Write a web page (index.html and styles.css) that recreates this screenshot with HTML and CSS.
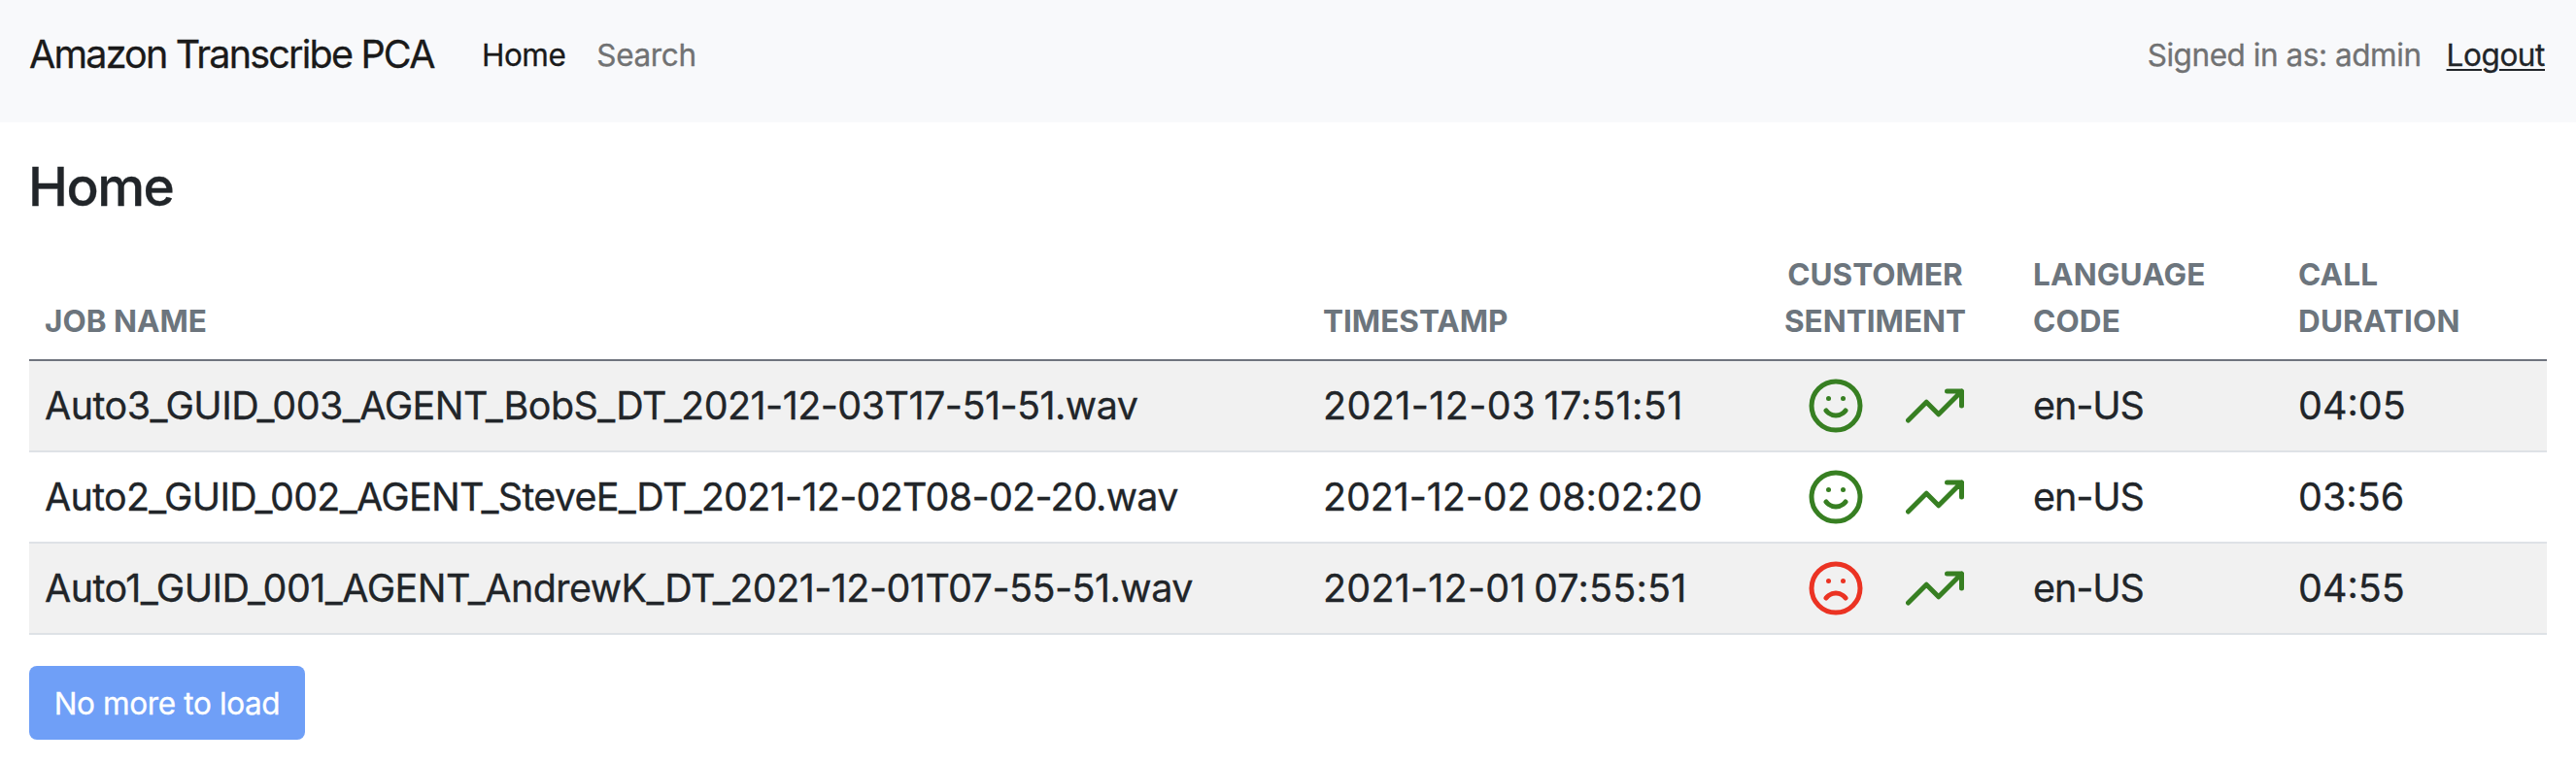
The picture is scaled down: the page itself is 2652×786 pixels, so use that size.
FILE: index.html
```html
<!DOCTYPE html>
<html lang="en">
<head>
<meta charset="utf-8">
<title>Amazon Transcribe PCA</title>
<link rel="stylesheet" href="styles.css">
</head>
<body>
<svg class="defs" aria-hidden="true">
  <symbol id="smile" viewBox="0 0 24 24"><circle cx="12" cy="12" r="10"/><path d="M8 14s1.5 2 4 2 4-2 4-2M9 9h.01M15 9h.01"/></symbol>
  <symbol id="frown" viewBox="0 0 24 24"><circle cx="12" cy="12" r="10"/><path d="M16 16s-1.500-2-4-2-4 2-4 2M9 9h.01M15 9h.01"/></symbol>
  <symbol id="trend" viewBox="0 0 24 24"><path d="M23 6l-9.500 9.500-5-5L1 18M17 6h6v6"/></symbol>
</svg>
<header class="navbar">
  <a class="brand">Amazon Transcribe PCA</a>
  <nav class="nav">
    <a class="nav-link active">Home</a>
    <a class="nav-link search">Search</a>
  </nav>
  <div class="account">
    <span class="signed">Signed in as: admin</span>
    <a class="logout">Logout</a>
  </div>
</header>
<main class="content">
  <h1 class="title">Home</h1>
  <table class="jobs">
    <colgroup><col class="c-job"><col class="c-time"><col class="c-mood"><col class="c-lang"><col class="c-dur"></colgroup>
    <thead>
      <tr><th>JOB NAME</th><th class="time">TIMESTAMP</th><th class="center">CUSTOMER<br>SENTIMENT</th><th class="wide">LANGUAGE<br>CODE</th><th class="wide">CALL<br>DURATION</th></tr>
    </thead>
    <tbody>
      <tr class="striped">
        <td class="job-a">Auto3_GUID_003_AGENT_BobS_DT_2021-12-03T17-51-51.wav</td>
        <td class="time time-a">2021-12-03 17:51:51</td>
        <td><div class="mood"><svg class="icon good"><use href="#smile"/></svg><svg class="icon good"><use href="#trend"/></svg></div></td>
        <td class="lang">en-US</td><td>04:05</td>
      </tr>
      <tr>
        <td class="job-b">Auto2_GUID_002_AGENT_SteveE_DT_2021-12-02T08-02-20.wav</td>
        <td class="time time-b">2021-12-02 08:02:20</td>
        <td><div class="mood"><svg class="icon good"><use href="#smile"/></svg><svg class="icon good"><use href="#trend"/></svg></div></td>
        <td class="lang">en-US</td><td>03:56</td>
      </tr>
      <tr class="striped">
        <td class="job-a">Auto1_GUID_001_AGENT_AndrewK_DT_2021-12-01T07-55-51.wav</td>
        <td class="time time-c">2021-12-01 07:55:51</td>
        <td><div class="mood"><svg class="icon bad"><use href="#frown"/></svg><svg class="icon good"><use href="#trend"/></svg></div></td>
        <td class="lang">en-US</td><td>04:55</td>
      </tr>
    </tbody>
  </table>
  <button class="load" disabled>No more to load</button>
</main>
</body>
</html>
```
FILE: styles.css
```css
* { box-sizing: border-box; }
body {
  margin: 0;
  background: #fff;
  color: #212529;
  font-family: Inter, "Liberation Sans", sans-serif;
  font-size: 31.5px;
  line-height: 48px;
  -webkit-text-stroke: .3px currentColor;
}
.defs { display: none; }

.navbar {
  display: flex;
  align-items: flex-start;
  height: 126px;
  padding: 26px 30px 0;
  background: #f8f9fb;
}
.brand {
  width: 418px;
  margin-right: 48px;
  font-size: 39.5px;
  line-height: 60px;
  letter-spacing: -1.8px;
  white-space: nowrap;
  color: #1a1a1a;
}
.nav { display: flex; gap: 32px; padding-top: 7px; }
.nav-link { letter-spacing: -.5px; color: #1a1a1a; }
.nav-link.search { letter-spacing: -.34px; color: #717273; }
.account { display: flex; gap: 26px; margin-left: auto; padding: 7px 2px 0 0; }
.signed { letter-spacing: -.45px; color: #717273; }
.logout {
  letter-spacing: -.4px;
  text-decoration: underline;
  text-decoration-thickness: 2px;
  text-underline-offset: 3px;
}

.content { padding: 33px 30px 0; }
.title {
  margin: 0 0 16px -1px;
  font-size: 55px;
  font-weight: 500;
  line-height: 67px;
  letter-spacing: -1.5px;
}

.jobs {
  width: 2592px;
  table-layout: fixed;
  border-collapse: separate;
  border-spacing: 0;
}
.c-job { width: 1317px; }
.c-time { width: 438px; }
.c-mood { width: 292px; }
.c-lang { width: 273px; }
.jobs th {
  padding: 17px 16px 15px;
  border-bottom: 2px solid #6f747e;
  color: #6c757d;
  font-weight: 700;
  text-align: left;
  vertical-align: bottom;
  -webkit-text-stroke: 0;
}
.jobs th.center { padding-right: 17px; text-align: center; }
.jobs th.wide { letter-spacing: .15px; }
.jobs td {
  height: 94px;
  padding: 0 16px;
  border-bottom: 2px solid #dee2e6;
  font-size: 39.5px;
  line-height: 60px;
  letter-spacing: 0;
  white-space: nowrap;
  vertical-align: middle;
}
.striped td { background: #f1f1f1; }
.jobs td.job-a { letter-spacing: -.55px; }
.jobs td.job-b { letter-spacing: -.73px; }
.jobs .time { padding-left: 15px; word-spacing: -3px; }
.jobs td.time-a { letter-spacing: .4px; }
.jobs td.time-b { letter-spacing: -.12px; }
.jobs td.time-c { letter-spacing: .2px; }
.jobs td.lang { letter-spacing: -1.1px; }

.mood { display: flex; gap: 42px; padding-left: 59px; }
.icon {
  flex: none;
  width: 60px;
  height: 60px;
  fill: none;
  stroke: currentColor;
  stroke-width: 2;
  stroke-linecap: round;
  stroke-linejoin: round;
}
.good { color: #377f22; }
.bad { color: #eb3323; }

.load {
  display: block;
  width: 284px;
  height: 76px;
  margin-top: 32px;
  padding: 2px 0 0;
  border: 0;
  border-radius: 8px;
  background: #6f9ff7;
  color: #fff;
  font: inherit;
  letter-spacing: -.37px;
}
```
